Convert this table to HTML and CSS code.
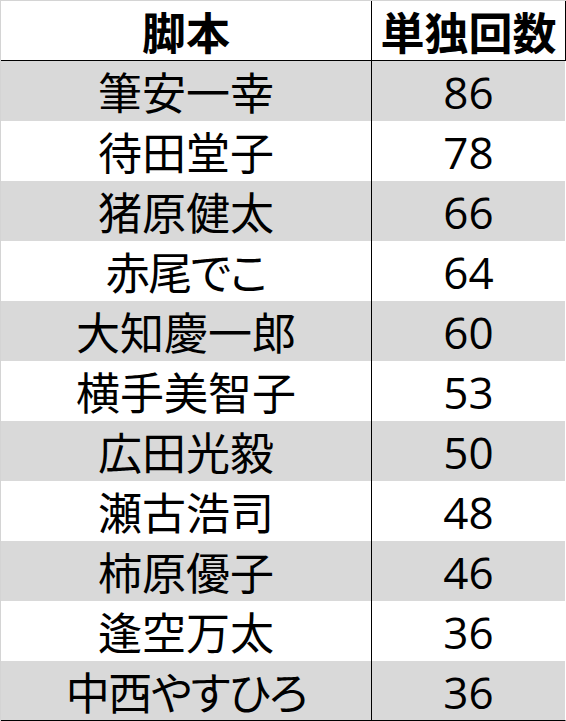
FILE: index.html
```html
<!DOCTYPE html>
<html lang="ja">
<head>
<meta charset="utf-8">
<title>脚本 単独回数</title>
<link rel="stylesheet" href="styles.css">
</head>
<body>
<div class="sheet">
  <div class="row head"><div class="cell">脚本</div><div class="cell">単独回数</div></div>
  <div class="row shade"><div class="cell">筆安一幸</div><div class="cell num">86</div></div>
  <div class="row"><div class="cell">待田堂子</div><div class="cell num">78</div></div>
  <div class="row shade"><div class="cell">猪原健太</div><div class="cell num">66</div></div>
  <div class="row"><div class="cell kana">赤尾でこ</div><div class="cell num">64</div></div>
  <div class="row shade"><div class="cell">大知慶一郎</div><div class="cell num">60</div></div>
  <div class="row"><div class="cell">横手美智子</div><div class="cell num">53</div></div>
  <div class="row shade"><div class="cell">広田光毅</div><div class="cell num">50</div></div>
  <div class="row"><div class="cell">瀬古浩司</div><div class="cell num">48</div></div>
  <div class="row shade"><div class="cell">柿原優子</div><div class="cell num">46</div></div>
  <div class="row"><div class="cell">逢空万太</div><div class="cell num">36</div></div>
  <div class="row shade last"><div class="cell kana">中西やすひろ</div><div class="cell num">36</div></div>
</div>
</body>
</html>
```
FILE: styles.css
```css
html, body {
  margin: 0;
  padding: 0;
  background: #ffffff;
}
.sheet {
  width: 566px;
  height: 721px;
  box-sizing: border-box;
  border-top: 1px solid #d4d4d4;
  border-left: 1px solid #d4d4d4;
  font-family: "Noto Sans CJK JP", "Noto Sans", sans-serif;
  font-size: 44px;
  color: #000000;
}
.row {
  display: grid;
  grid-template-columns: 370px 194px;
  height: 60px;
  box-sizing: border-box;
  border-right: 1px solid #ffffff;
}
.row.shade {
  background: #d9d9d9;
}
.row.head {
  height: 60px;
  border-bottom: 1px solid #000000;
  border-right: 1px solid #000000;
  font-weight: bold;
}
.row.last {
  height: 60px;
  border-bottom: 1px solid #000000;
}
.cell {
  display: flex;
  align-items: center;
  justify-content: center;
  line-height: 1;
  white-space: nowrap;
  box-sizing: border-box;
}
.cell + .cell {
  border-left: 1px solid #000000;
}
.cell.num {
  font-family: "Open Sans", "Noto Sans", sans-serif;
  font-size: 44px;
  padding-top: 2px;
}
.cell.kana {
  font-feature-settings: "palt";
  letter-spacing: -1.5px;
}
```
